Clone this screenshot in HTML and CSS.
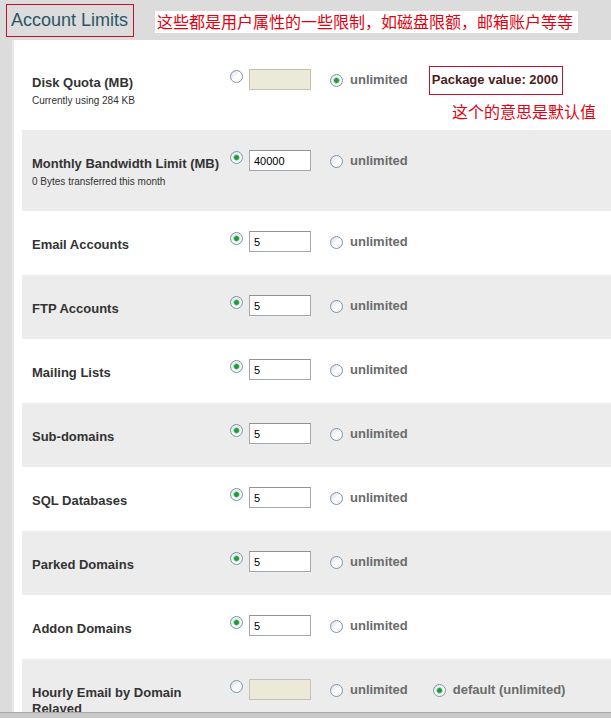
FILE: index.html
```html
<!DOCTYPE html>
<html lang="zh-CN">
<head>
<meta charset="utf-8">
<title>Account Limits</title>
<link rel="stylesheet" href="styles.css">
</head>
<body>
<header class="top">
  <h2 class="title">Account Limits</h2>
  <p class="note">这些都是用户属性的一些限制，如磁盘限额，邮箱账户等等</p>
</header>

<main class="limits">
  <div class="limit-row">
    <div class="limit-label">
      <div class="name">Disk Quota (MB)</div>
      <div class="sub">Currently using 284 KB</div>
    </div>
    <div class="limit-controls">
      <span class="opt"><input class="radio" type="radio" name="quota"><input class="num" type="text" disabled></span>
      <label class="opt opt-text"><input class="radio" type="radio" name="quota" checked><span>unlimited</span></label>
      <span class="pkg">Package value: 2000</span>
    </div>
    <p class="pkg-note">这个的意思是默认值</p>
  </div>

  <div class="limit-row alt">
    <div class="limit-label">
      <div class="name">Monthly Bandwidth Limit (MB)</div>
      <div class="sub">0 Bytes transferred this month</div>
    </div>
    <div class="limit-controls">
      <span class="opt"><input class="radio" type="radio" name="bw" checked><input class="num" type="text" value="40000"></span>
      <label class="opt opt-text"><input class="radio" type="radio" name="bw"><span>unlimited</span></label>
    </div>
  </div>

  <div class="limit-row">
    <div class="limit-label"><div class="name">Email Accounts</div></div>
    <div class="limit-controls">
      <span class="opt"><input class="radio" type="radio" name="email" checked><input class="num" type="text" value="5"></span>
      <label class="opt opt-text"><input class="radio" type="radio" name="email"><span>unlimited</span></label>
    </div>
  </div>

  <div class="limit-row alt">
    <div class="limit-label"><div class="name">FTP Accounts</div></div>
    <div class="limit-controls">
      <span class="opt"><input class="radio" type="radio" name="ftp" checked><input class="num" type="text" value="5"></span>
      <label class="opt opt-text"><input class="radio" type="radio" name="ftp"><span>unlimited</span></label>
    </div>
  </div>

  <div class="limit-row">
    <div class="limit-label"><div class="name">Mailing Lists</div></div>
    <div class="limit-controls">
      <span class="opt"><input class="radio" type="radio" name="lists" checked><input class="num" type="text" value="5"></span>
      <label class="opt opt-text"><input class="radio" type="radio" name="lists"><span>unlimited</span></label>
    </div>
  </div>

  <div class="limit-row alt">
    <div class="limit-label"><div class="name">Sub-domains</div></div>
    <div class="limit-controls">
      <span class="opt"><input class="radio" type="radio" name="subs" checked><input class="num" type="text" value="5"></span>
      <label class="opt opt-text"><input class="radio" type="radio" name="subs"><span>unlimited</span></label>
    </div>
  </div>

  <div class="limit-row">
    <div class="limit-label"><div class="name">SQL Databases</div></div>
    <div class="limit-controls">
      <span class="opt"><input class="radio" type="radio" name="sql" checked><input class="num" type="text" value="5"></span>
      <label class="opt opt-text"><input class="radio" type="radio" name="sql"><span>unlimited</span></label>
    </div>
  </div>

  <div class="limit-row alt">
    <div class="limit-label"><div class="name">Parked Domains</div></div>
    <div class="limit-controls">
      <span class="opt"><input class="radio" type="radio" name="parked" checked><input class="num" type="text" value="5"></span>
      <label class="opt opt-text"><input class="radio" type="radio" name="parked"><span>unlimited</span></label>
    </div>
  </div>

  <div class="limit-row">
    <div class="limit-label"><div class="name">Addon Domains</div></div>
    <div class="limit-controls">
      <span class="opt"><input class="radio" type="radio" name="addon" checked><input class="num" type="text" value="5"></span>
      <label class="opt opt-text"><input class="radio" type="radio" name="addon"><span>unlimited</span></label>
    </div>
  </div>

  <div class="limit-row alt">
    <div class="limit-label"><div class="name">Hourly Email by Domain Relayed</div></div>
    <div class="limit-controls">
      <span class="opt"><input class="radio" type="radio" name="hourly"><input class="num" type="text" disabled></span>
      <label class="opt opt-text"><input class="radio" type="radio" name="hourly"><span>unlimited</span></label>
      <label class="opt opt-text opt-default"><input class="radio" type="radio" name="hourly" checked><span>default (unlimited)</span></label>
    </div>
  </div>
</main>

<div class="statusbar"></div>
</body>
</html>
```

FILE: styles.css
```css
html, body {
  margin: 0;
  padding: 0;
}

body {
  background: #dcdcdc;
  font-family: "Liberation Sans", Arial, sans-serif;
  color: #333;
  overflow: hidden;
}

/* header strip with the section title and the red note */
.top {
  height: 40px;
  display: flex;
  align-items: flex-start;
  box-sizing: border-box;
  padding: 4px 0 0 6px;
}

.title {
  margin: 0;
  width: 128px;
  height: 33px;
  box-sizing: border-box;
  border: 1px solid #c8102e;
  padding: 3px 0 0 4px;
  font-size: 18px;
  font-weight: normal;
  line-height: 24px;
  color: #2b5566;
}

.note {
  margin: 7px 0 0 21px;
  width: 423px;
  height: 22px;
  box-sizing: border-box;
  background: #fff;
  padding: 0 2px;
  font-family: "Noto Sans CJK SC", sans-serif;
  font-size: 16px;
  line-height: 21px;
  color: #e4000f;
  white-space: nowrap;
}

/* white panel holding the limit rows */
.limits {
  margin-left: 12px;
  border-left: 2px solid #e8e8e8;
  background: #fff;
  padding: 9px 0 0 8px;
  min-height: 700px;
}

.limit-row {
  position: relative;
  display: flex;
  align-items: flex-start;
  padding: 20px 0 22px 10px;
  min-height: 21px;
}

.limit-row.alt {
  background: #ececec;
}

.limit-label {
  flex: 0 0 198px;
  padding-top: 6px;
}

.name {
  font-size: 13px;
  font-weight: bold;
  line-height: 16px;
  color: #333;
  width: 192px;
}

.sub {
  margin-top: 4px;
  margin-bottom: 1px;
  font-size: 10px;
  line-height: 12px;
  color: #333;
}

.limit-controls {
  display: flex;
  align-items: flex-start;
}

.opt {
  display: flex;
  align-items: flex-start;
}

.opt-text {
  margin-left: 19px;
  margin-top: 3px;
  align-items: center;
  font-size: 13px;
  font-weight: bold;
  line-height: 16px;
  color: #6b6b6b;
}

.opt-text .radio {
  margin: 0 7px 0 0;
}

.opt-default {
  margin-left: 25px;
}

/* XP-style radio buttons */
.radio {
  -webkit-appearance: none;
  appearance: none;
  flex: none;
  width: 13px;
  height: 13px;
  margin: 1px 6px 0 0;
  box-sizing: border-box;
  border: 1px solid #7f93ab;
  border-radius: 50%;
  background: linear-gradient(135deg, #d9dde3 0%, #ffffff 55%, #f4f4f4 100%);
}

.radio:checked {
  background:
    radial-gradient(circle at 50% 50%, #249a3c 0 2px, #7fcf8e 2.6px, rgba(255,255,255,0) 3.6px),
    linear-gradient(135deg, #d9dde3 0%, #ffffff 55%, #f4f4f4 100%);
}

.num {
  width: 62px;
  height: 21px;
  box-sizing: border-box;
  margin: 0;
  border: 1px solid #a3a8ae;
  border-top-color: #8e9398;
  padding: 0 4px;
  font-family: "Liberation Sans", Arial, sans-serif;
  font-size: 11px;
  color: #000;
  background: #fff;
}

.num:disabled {
  background: #ece9d8;
  border-color: #c4c2b6;
}

.pkg {
  margin: -3px 0 0 21px;
  border: 1px solid #c8102e;
  padding: 5px 4px 6px 2px;
  font-size: 13px;
  font-weight: bold;
  line-height: 16px;
  color: #4a1d1d;
  white-space: nowrap;
}

.pkg-note {
  position: absolute;
  left: 430px;
  top: 52px;
  margin: 0;
  font-family: "Noto Sans CJK SC", sans-serif;
  font-size: 16px;
  line-height: 20px;
  color: #e4000f;
}

/* strip along the bottom edge */
.statusbar {
  position: fixed;
  left: 0;
  right: 0;
  bottom: 0;
  height: 5px;
  background: #c8c8c8;
  border-top: 1px solid #a8a8a8;
}
```
